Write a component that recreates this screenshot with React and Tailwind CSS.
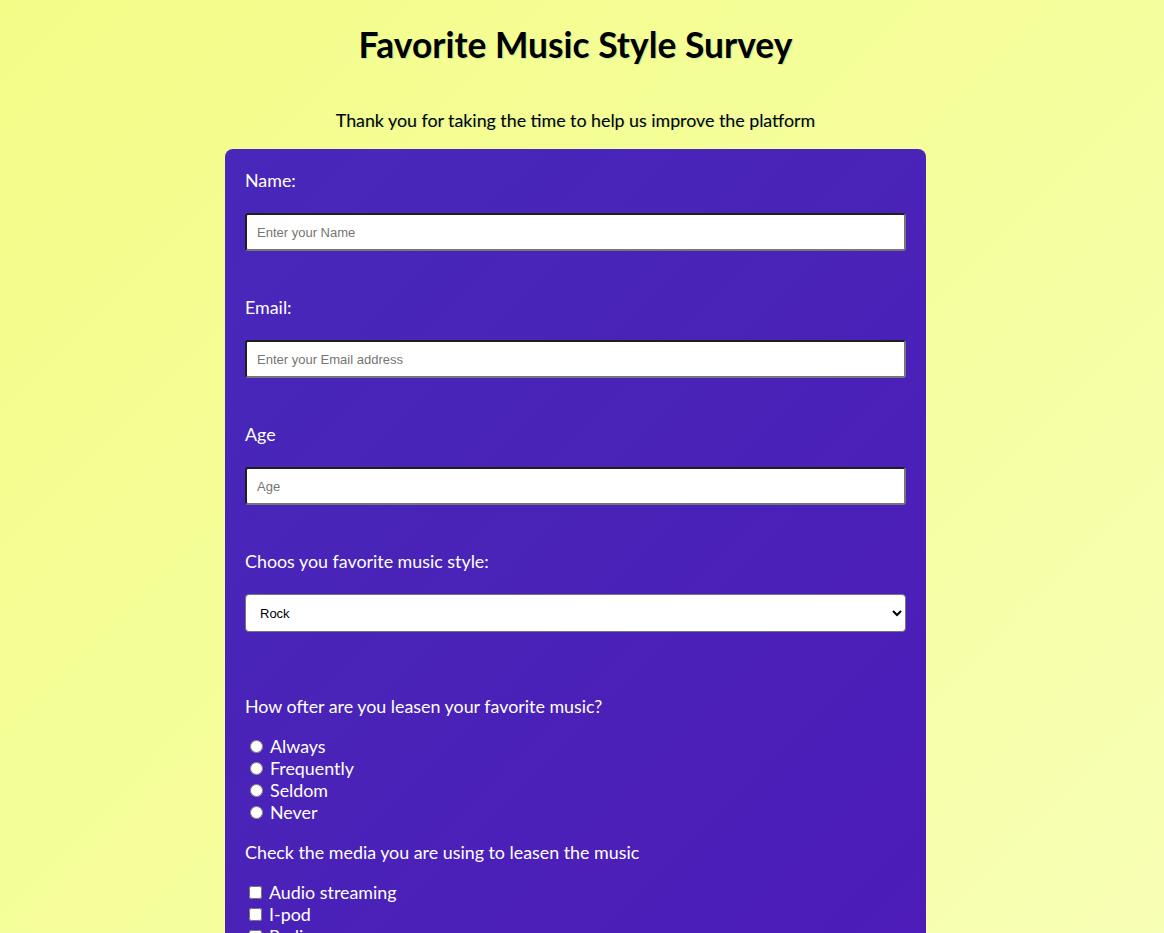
import React from 'react';

const inputClass =
  'block w-full h-[38px] bg-white rounded-[3px] border-2 border-t-[#1f1f1f] border-l-[#1f1f1f] border-b-[#767676] border-r-[#767676] px-[10px] text-[13px] text-black placeholder:text-[#757575] font-["Liberation_Sans",Arial,sans-serif]';

export default function App() {
  return (
    <div className='min-h-[933px] bg-[linear-gradient(135deg,#f2fd88_0%,#f5fe9c_50%,#f8ffb8_100%)] font-["Lato",sans-serif] pr-[13px] pb-10'>
      {/* Header */}
      <h1 className="pt-[22px] text-center text-[35.4px] leading-[46px] font-bold text-black [text-shadow:1px_1px_0_rgba(0,150,150,0.2)]">
        Favorite Music Style Survey
      </h1>
      <p className="mt-[41px] text-center text-[17.8px] leading-[22px] text-black [text-shadow:1px_0_0_rgba(0,150,150,0.2)]">
        Thank you for taking the time to help us improve the platform
      </p>

      {/* Form card */}
      <form className="mx-auto mt-[18px] w-[701px] rounded-[8px] bg-[linear-gradient(135deg,#4728ba_0%,#4a22b8_50%,#4d1bb9_100%)] p-[20px] text-white text-[17.85px] leading-[22px]">
        <label className="block">Name:</label>
        <input type="text" placeholder="Enter your Name" className={`mt-[22px] ${inputClass}`} />

        <label className="block mt-[45px]">Email:</label>
        <input type="email" placeholder="Enter your Email address" className={`mt-[22px] ${inputClass}`} />

        <label className="block mt-[45px]">Age</label>
        <input type="number" placeholder="Age" className={`mt-[22px] ${inputClass}`} />

        <label className="block mt-[45px]">Choos you favorite music style:</label>
        <select className='mt-[22px] block w-full h-[38px] bg-white text-black rounded-[4px] border border-[#767676] pl-[10px] pr-2 text-[13px] font-["Liberation_Sans",Arial,sans-serif]'>
          <option>Rock</option>
          <option>Pop</option>
          <option>Jazz</option>
          <option>Classical</option>
          <option>Hip-hop</option>
        </select>

        <p className="mt-[63px]">How ofter are you leasen your favorite music?</p>
        <div className="mt-[18px]">
          {['Always', 'Frequently', 'Seldom', 'Never'].map((opt) => (
            <label key={opt} className="flex items-center h-[22px]">
              <input type="radio" name="often" className="ml-[5px] mr-[7px] w-[13px] h-[13px]" />
              {opt}
            </label>
          ))}
        </div>

        <p className="mt-[18px]">Check the media you are using to leasen the music</p>
        <div className="mt-[18px]">
          {['Audio streaming', 'I-pod', 'Radio', 'CD player'].map((opt) => (
            <label key={opt} className="flex items-center h-[22px]">
              <input type="checkbox" className="ml-[4px] mr-[7px] w-[13px] h-[13px]" />
              {opt}
            </label>
          ))}
        </div>
      </form>
    </div>
  );
}
